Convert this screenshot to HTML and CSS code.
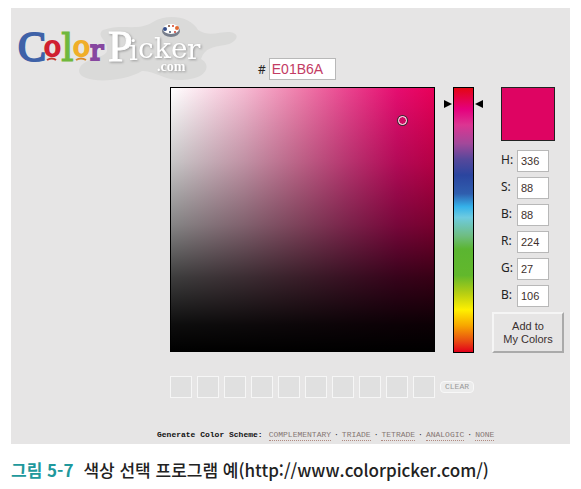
FILE: index.html
```html
<!DOCTYPE html>
<html lang="ko">
<head>
<meta charset="utf-8">
<title>ColorPicker.com</title>
<link rel="stylesheet" href="styles.css">
</head>
<body>
<figure class="figure">
  <main class="panel">
    <header class="header">
      <svg class="logo" viewBox="0 0 236 72" role="img" aria-label="ColorPicker.com">
        <path class="blob" d="M92 22C112 15 126 24 142 14C156 5 180 8 187 22C198 29 207 24 218 24C231 25 226 35 214 37C201 39 194 40 190 51C201 57 195 69 179 71C156 76 145 62 131 63C111 75 69 76 68 63C69 50 94 51 96 43C98 33 84 28 92 22Z"/>
        <g class="logo-color">
          <text class="big blue" x="7" y="53">C</text>
          <text class="mid red" x="33" y="48">o</text>
          <text class="tall green" x="50" y="53">l</text>
          <text class="mid gold" x="62" y="48">o</text>
          <text class="mid purple" x="79" y="52">r</text>
          <path class="red-line" d="M36 52Q41 49 45 52"/>
          <path class="gold-line" d="M65 52Q70 49 75 52"/>
        </g>
        <g class="logo-white">
          <text class="cap" x="97" y="53">P</text>
          <text class="low" x="118" y="52">i</text>
          <text class="low" x="127" y="50">c</text>
          <text class="low" x="143" y="50">k</text>
          <text class="low" x="160" y="50">e</text>
          <text class="low" x="176" y="51">r</text>
          <text class="com" x="146" y="63">.com</text>
        </g>
        <ellipse class="palette-shadow" cx="160" cy="23" rx="9" ry="6"/>
        <ellipse class="palette" cx="160" cy="21" rx="8" ry="5"/>
        <circle cx="154" cy="21" r="2" fill="#334c88"/>
        <circle cx="158" cy="18" r="1" fill="#7a4a32"/>
        <circle cx="162" cy="18" r="1" fill="#d54024"/>
        <circle cx="166" cy="20" r="2" fill="#e26a32"/>
        <circle cx="164" cy="24" r="1" fill="#c53c32"/>
        <circle cx="159" cy="24" r="1" fill="#45536e"/>
      </svg>
      <div class="hex">
        <label for="hex">#</label>
        <input id="hex" type="text" value="E01B6A">
      </div>
    </header>

    <section class="picker">
      <div class="field"><span class="marker"></span></div>
      <div class="hue">
        <svg class="arrows" viewBox="0 0 39 10" aria-hidden="true"><path d="M0 1L8 5L0 9ZM39 1L31 5L39 9Z"/></svg>
      </div>
      <div class="values">
        <div class="sample"></div>
        <div class="row"><label for="h">H:</label><input id="h" type="text" value="336"></div>
        <div class="row"><label for="s">S:</label><input id="s" type="text" value="88"></div>
        <div class="row"><label for="v">B:</label><input id="v" type="text" value="88"></div>
        <div class="row"><label for="r">R:</label><input id="r" type="text" value="224"></div>
        <div class="row"><label for="g">G:</label><input id="g" type="text" value="27"></div>
        <div class="row"><label for="b">B:</label><input id="b" type="text" value="106"></div>
        <button class="add" type="button">Add to<br>My Colors</button>
      </div>
    </section>

    <section class="saved">
      <span class="slot"></span><span class="slot"></span><span class="slot"></span><span class="slot"></span><span class="slot"></span>
      <span class="slot"></span><span class="slot"></span><span class="slot"></span><span class="slot"></span><span class="slot"></span>
      <button class="clear" type="button">CLEAR</button>
    </section>

    <nav class="scheme">
      <strong>Generate Color Scheme:</strong>
      <a href="#">COMPLEMENTARY</a><span>·</span>
      <a href="#">TRIADE</a><span>·</span>
      <a href="#">TETRADE</a><span>·</span>
      <a href="#">ANALOGIC</a><span>·</span>
      <a href="#">NONE</a>
    </nav>
  </main>
  <figcaption class="caption"><b>그림 5-7</b><span>색상 선택 프로그램 예(http://www.colorpicker.com/)</span></figcaption>
</figure>
</body>
</html>
```
FILE: styles.css
```css
* {
  box-sizing: border-box;
}

body {
  margin: 0;
  background: #fff;
  color: #222;
  font-family: "Liberation Sans", sans-serif;
}

.figure {
  margin: 8px 11px 0;
}

.panel {
  padding-bottom: 3px;
  background: #e6e5e5;
}

.header {
  display: flex;
  align-items: flex-end;
  gap: 11px;
}

.logo {
  flex: none;
  width: 236px;
  height: 72px;
  overflow: visible;
}

.blob {
  fill: #dadad9;
}

.logo text {
  font-family: "DejaVu Serif", serif;
}

.logo .big {
  font-family: "Liberation Serif", serif;
  font-size: 42px;
  stroke-width: 2px;
}

.logo .tall {
  font-size: 40px;
  stroke-width: 1px;
}

.logo .mid {
  font-size: 28px;
  stroke-width: 2px;
}

.blue { fill: #3f62a8; stroke: #3f62a8; }
.red { fill: #d02030; stroke: #d02030; }
.green { fill: #70b83c; stroke: #70b83c; }
.gold { fill: #f0ae28; stroke: #f0ae28; }
.purple { fill: #8747a0; stroke: #8747a0; }

.red-line,
.gold-line {
  fill: none;
  stroke: #c23a30;
  stroke-width: 2px;
}

.gold-line {
  stroke: #d98a2c;
}

.logo-white {
  fill: #fff;
  filter: drop-shadow(1px 1px 1px #999);
}

.logo .cap {
  font-family: "Liberation Serif", serif;
  font-size: 44px;
  stroke: #fff;
}

.logo .low { font-size: 28px; }

.logo .com {
  font-family: "Liberation Serif", serif;
  font-size: 14px;
  font-weight: bold;
}

.palette-shadow { fill: #777e8c; }
.palette { fill: #fff; }

.hex {
  display: flex;
  align-items: center;
  gap: 3px;
}

.hex label {
  font-family: "Noto Sans", sans-serif;
  font-size: 12px;
}

.hex input,
.row input {
  border: 1px solid #b8b8b8;
  border-radius: 0;
  background: #fff;
  font-family: inherit;
}

.hex input {
  width: 67px;
  height: 22px;
  padding: 0 2px;
  color: #c33c64;
  font-size: 14px;
}

.picker {
  display: grid;
  grid-template-columns: minmax(0, 1fr) 21px 72px;
  gap: 18px;
  align-items: start;
  margin: 7px 6px 0 159px;
}

.field {
  position: relative;
  aspect-ratio: 1;
  border: 1px solid #000;
  background:
    linear-gradient(to bottom, rgb(0 0 0 / 0), rgb(0 0 0 / .22) 28%, rgb(0 0 0 / .48) 52%, rgb(0 0 0 / .76) 72%, rgb(0 0 0 / .95) 90%, #000),
    linear-gradient(to right, #fff, #f6bad2 28%, #f07fad 48%, #ea418d 68%, #e60d70 86%, #e80058);
}

.marker {
  position: absolute;
  left: 88%;
  top: 12%;
  width: 9px;
  height: 9px;
  margin: -4px;
  border: 1px solid #fff;
  border-radius: 50%;
  box-shadow: 0 0 0 1px #333;
}

.hue {
  position: relative;
  height: 100%;
  border: 1px solid #000;
  background: linear-gradient(to bottom, #e30613, #e5007d 8%, #dc3592 14%, #a3489a 21%, #56489b 27%, #2b459f 33%, #2f5eae 40%, #35b2ea 45%, #6ecbe0 49%, #6fbd82 56%, #5bb531 61%, #62b82c 71%, #b9cf12 78%, #fff000 84%, #f7a600 90%, #e84a12 96%, #e2001a);
}

.arrows {
  position: absolute;
  left: -10px;
  top: 11px;
  width: 39px;
  height: 10px;
}

.values {
  display: flex;
  flex-direction: column;
  gap: 5px;
}

.sample {
  width: 54px;
  height: 54px;
  margin: 0 0 4px 9px;
  border: 1px solid #222;
  background: #de0462;
}

.row {
  display: flex;
  align-items: center;
  margin-left: 9px;
}

.row label {
  width: 16px;
  padding-bottom: 3px;
  font-family: "Noto Sans", sans-serif;
  font-size: 12px;
  line-height: 16px;
}

.row input {
  width: 32px;
  height: 22px;
  padding: 0 3px;
  color: #40302c;
  font-size: 11px;
}

.add {
  height: 41px;
  padding: 0;
  border: 2px solid;
  border-color: #f5f5f5 #aaa #aaa #f5f5f5;
  background: #e6e5e5;
  color: #3a3030;
  font-family: inherit;
  font-size: 11px;
  line-height: 13px;
}

.saved {
  display: flex;
  align-items: center;
  gap: 5px;
  margin: 23px 0 0 159px;
}

.slot {
  width: 22px;
  height: 22px;
  border: 1px solid #f6f6f6;
  background: #e0e0e0;
}

.clear {
  height: 12px;
  padding: 0 4px;
  border: 1px solid #f8f8f8;
  border-radius: 4px;
  background: #ececec;
  color: #999;
  font-family: "Liberation Mono", monospace;
  font-size: 8px;
  line-height: 10px;
}

.scheme {
  display: flex;
  gap: 3px;
  margin: 32px 0 0 146px;
  color: #222;
  font-family: "Liberation Mono", monospace;
  font-size: 8px;
  line-height: 10px;
}

.scheme strong {
  margin-right: 3px;
  color: #111;
}

.scheme a {
  border-bottom: 1px dotted #b08a80;
  color: #857673;
  text-decoration: none;
}

.caption {
  display: flex;
  gap: 10px;
  margin-top: 14px;
  font-family: "Noto Sans CJK KR", sans-serif;
  font-size: 17px;
  font-weight: 500;
  line-height: 24px;
  white-space: nowrap;
}

.caption b {
  color: #20989c;
}
```
